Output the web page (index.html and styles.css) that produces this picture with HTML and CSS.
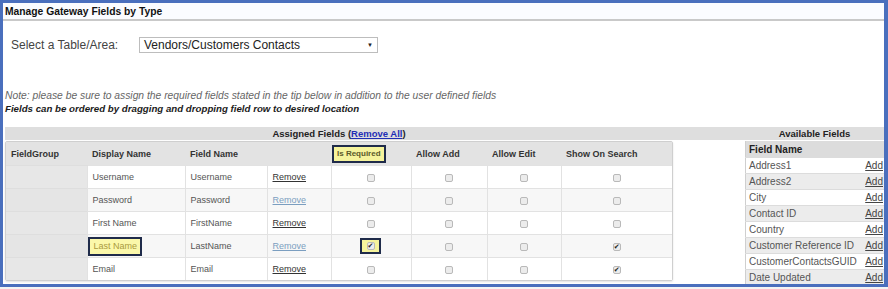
FILE: index.html
```html
<!DOCTYPE html>
<html>
<head>
<meta charset="utf-8">
<link rel="stylesheet" href="styles.css">
</head>
<body>
<div class="frame">
  <div class="titlebar">Manage Gateway Fields by Type</div>
  <div class="select-row">
    <span class="select-label">Select a Table/Area:</span>
    <div class="select"><span>Vendors/Customers Contacts</span><span class="arrow">&#9660;</span></div>
  </div>
  <p class="note">Note: please be sure to assign the required fields stated in the tip below in addition to the user defined fields</p>
  <p class="note-bold">Fields can be ordered by dragging and dropping field row to desired location</p>
  <div class="panels">
    <section class="assigned">
      <div class="band"><span class="band-text">Assigned Fields (<a class="remove-all">Remove All</a>)</span></div>
      <div class="grid-box">
        <table class="grid">
          <colgroup>
            <col class="c-group"><col class="c-disp"><col class="c-field"><col class="c-rem"><col class="c-req"><col class="c-add"><col class="c-edit"><col class="c-search">
          </colgroup>
          <thead>
            <tr>
              <th>FieldGroup</th>
              <th>Display Name</th>
              <th>Field Name</th>
              <th></th>
              <th class="th-req"><span class="hl hl-head">Is Required</span></th>
              <th>Allow Add</th>
              <th>Allow Edit</th>
              <th>Show On Search</th>
            </tr>
          </thead>
          <tbody>
            <tr>
              <td class="grp"></td><td>Username</td><td>Username</td><td><a class="rm">Remove</a></td>
              <td class="ctr"><span class="cb"></span></td><td class="ctr"><span class="cb"></span></td><td class="ctr"><span class="cb"></span></td><td class="ctr"><span class="cb"></span></td>
            </tr>
            <tr class="alt">
              <td class="grp"></td><td>Password</td><td>Password</td><td><a class="rm rm-light">Remove</a></td>
              <td class="ctr"><span class="cb"></span></td><td class="ctr"><span class="cb"></span></td><td class="ctr"><span class="cb"></span></td><td class="ctr"><span class="cb"></span></td>
            </tr>
            <tr>
              <td class="grp"></td><td>First Name</td><td>FirstName</td><td><a class="rm">Remove</a></td>
              <td class="ctr"><span class="cb"></span></td><td class="ctr"><span class="cb"></span></td><td class="ctr"><span class="cb"></span></td><td class="ctr"><span class="cb"></span></td>
            </tr>
            <tr class="alt">
              <td class="grp"></td><td class="td-hl"><span class="hl hl-name">Last Name</span></td><td>LastName</td><td><a class="rm rm-light">Remove</a></td>
              <td class="ctr"><span class="hl hl-cb"><span class="cb on"></span></span></td><td class="ctr"><span class="cb"></span></td><td class="ctr"><span class="cb"></span></td><td class="ctr"><span class="cb on"></span></td>
            </tr>
            <tr>
              <td class="grp"></td><td>Email</td><td>Email</td><td><a class="rm">Remove</a></td>
              <td class="ctr"><span class="cb"></span></td><td class="ctr"><span class="cb"></span></td><td class="ctr"><span class="cb"></span></td><td class="ctr"><span class="cb on"></span></td>
            </tr>
          </tbody>
        </table>
      </div>
    </section>
    <section class="available">
      <div class="band band-avail">Available Fields</div>
      <table class="avail">
        <thead><tr><th colspan="2">Field Name</th></tr></thead>
        <tbody>
          <tr><td>Address1</td><td class="add"><a>Add</a></td></tr>
          <tr class="alt"><td>Address2</td><td class="add"><a>Add</a></td></tr>
          <tr><td>City</td><td class="add"><a>Add</a></td></tr>
          <tr class="alt"><td>Contact ID</td><td class="add"><a>Add</a></td></tr>
          <tr><td>Country</td><td class="add"><a>Add</a></td></tr>
          <tr class="alt"><td>Customer Reference ID</td><td class="add"><a>Add</a></td></tr>
          <tr><td>CustomerContactsGUID</td><td class="add"><a>Add</a></td></tr>
          <tr class="alt"><td>Date Updated</td><td class="add"><a>Add</a></td></tr>
        </tbody>
      </table>
    </section>
  </div>
</div>
</body>
</html>
```

FILE: styles.css
```css
html, body {
  margin: 0;
  padding: 0;
  background: #f4f4f4;
}
body {
  font-family: "Liberation Sans", Arial, sans-serif;
  color: #333;
}
.frame {
  box-sizing: border-box;
  width: 888px;
  height: 287px;
  border: 3px solid #4a6fbd;
  border-right-width: 4px;
  background: #fff;
  overflow: hidden;
}
.titlebar {
  height: 16px;
  line-height: 17px;
  padding-left: 2px;
  font-size: 10.3px;
  font-weight: bold;
  color: #111;
  background: #fbfcff;
  border-bottom: 2px solid #c9c9c9;
}
.select-row {
  display: flex;
  align-items: center;
  margin-top: 16px;
  height: 16px;
  padding-left: 8px;
}
.select-label {
  width: 128px;
  font-size: 12px;
  color: #444;
}
.select {
  box-sizing: border-box;
  width: 239px;
  height: 16px;
  border: 1px solid #bdbdbd;
  display: flex;
  align-items: center;
  justify-content: space-between;
  padding: 0 4px;
  font-size: 12px;
  color: #222;
}
.arrow {
  font-size: 6px;
  color: #222;
}
.note {
  margin: 37px 0 0 2px;
  height: 12px;
  line-height: 12px;
  font-size: 10.3px;
  font-style: italic;
  color: #666;
  white-space: nowrap;
}
.note-bold {
  margin: 1px 0 0 2px;
  height: 12px;
  line-height: 12px;
  font-size: 9.7px;
  font-style: italic;
  font-weight: bold;
  color: #1a1a1a;
  white-space: nowrap;
}
.panels {
  display: flex;
  margin-top: 12px;
  padding-left: 2px;
}
.band {
  height: 13px;
  line-height: 13px;
  background: #dedede;
  font-size: 9.5px;
  font-weight: bold;
  color: #222;
}
.assigned {
  width: 740px;
}
.band-text {
  display: block;
  width: 668px;
  text-align: center;
}
.remove-all {
  color: #1f2fb5;
  text-decoration: underline;
}
.grid-box {
  margin-top: 1px;
  width: 668px;
  box-sizing: border-box;
  border: 1px solid #cfcfcf;
  border-radius: 2px;
  box-shadow: 0 1px 2px rgba(0,0,0,0.12);
}
.grid {
  width: 100%;
  table-layout: fixed;
  border-collapse: collapse;
  font-size: 9px;
}
.c-group { width: 81px; }
.c-disp { width: 98px; }
.c-field { width: 82px; }
.c-rem { width: 64px; }
.c-req { width: 80px; }
.c-add { width: 76px; }
.c-edit { width: 74px; }
.c-search { width: 111px; }
.grid th {
  height: 23px;
  padding: 0 0 0 5px;
  background: #e3e3e3;
  text-align: left;
  font-weight: bold;
  color: #333;
  white-space: nowrap;
}
.grid th.th-req { padding-left: 0; }
.grid td {
  height: 22px;
  padding: 0 0 0 5px;
  border-top: 1px solid #e2e2e2;
  border-left: 1px solid #e2e2e2;
  color: #555;
  background: #fff;
}
.grid tr.alt td { background: #f7f7f7; }
.grid td.grp {
  background: #e7e7e7;
  border-left: none;
  border-top-color: #dedede;
}
.grid tr.alt td.grp { background: #e5e5e5; }
.grid td.ctr {
  padding: 0;
  text-align: center;
}
.grid td.td-hl { padding-left: 0; }
.rm {
  color: #333;
  text-decoration: underline;
}
.rm-light { color: #7b9ec0; }
.hl {
  display: inline-flex;
  align-items: center;
  box-sizing: border-box;
  background: #f5f39c;
  border: 2px solid #1f2b4a;
  white-space: nowrap;
}
.hl-head {
  height: 18px;
  margin-left: 1px;
  padding: 0 3px 0 3px;
  font-size: 8px;
  color: #5a5a2a;
}
.hl-name {
  width: 54px;
  height: 19px;
  padding-left: 4px;
  color: #a99a3e;
  background: #fbf8aa;
}
.hl-cb {
  width: 21px;
  height: 16px;
  justify-content: center;
  vertical-align: middle;
  margin-left: -1px;
}
.cb {
  display: inline-block;
  box-sizing: border-box;
  width: 8px;
  height: 8px;
  border: 1px solid #b9b9b9;
  border-radius: 2px;
  background: #ececec;
  vertical-align: middle;
  position: relative;
}
.cb.on::after {
  content: "\2714";
  position: absolute;
  left: 0px;
  top: -2px;
  font-family: "DejaVu Sans", sans-serif;
  font-size: 7px;
  line-height: 10px;
  color: #222;
}
.available {
  width: 139px;
}
.band-avail {
  text-align: center;
}
.avail {
  margin-top: 1px;
  width: 139px;
  border-collapse: collapse;
  font-size: 10px;
  color: #555;
  border-left: 1px solid #cfcfcf;
}
.avail th {
  height: 16px;
  padding: 0 0 0 3px;
  text-align: left;
  font-weight: bold;
  color: #222;
  background: #dcdcdc;
}
.avail td {
  height: 15px;
  padding: 0 0 0 3px;
  border-top: 1px solid #dcdcdc;
  white-space: nowrap;
  background: #fff;
}
.avail tr.alt td { background: #ececec; }
.avail td.add {
  text-align: right;
  padding: 0 1px 0 0;
}
.avail td.add a {
  color: #444;
  text-decoration: underline;
}
```
